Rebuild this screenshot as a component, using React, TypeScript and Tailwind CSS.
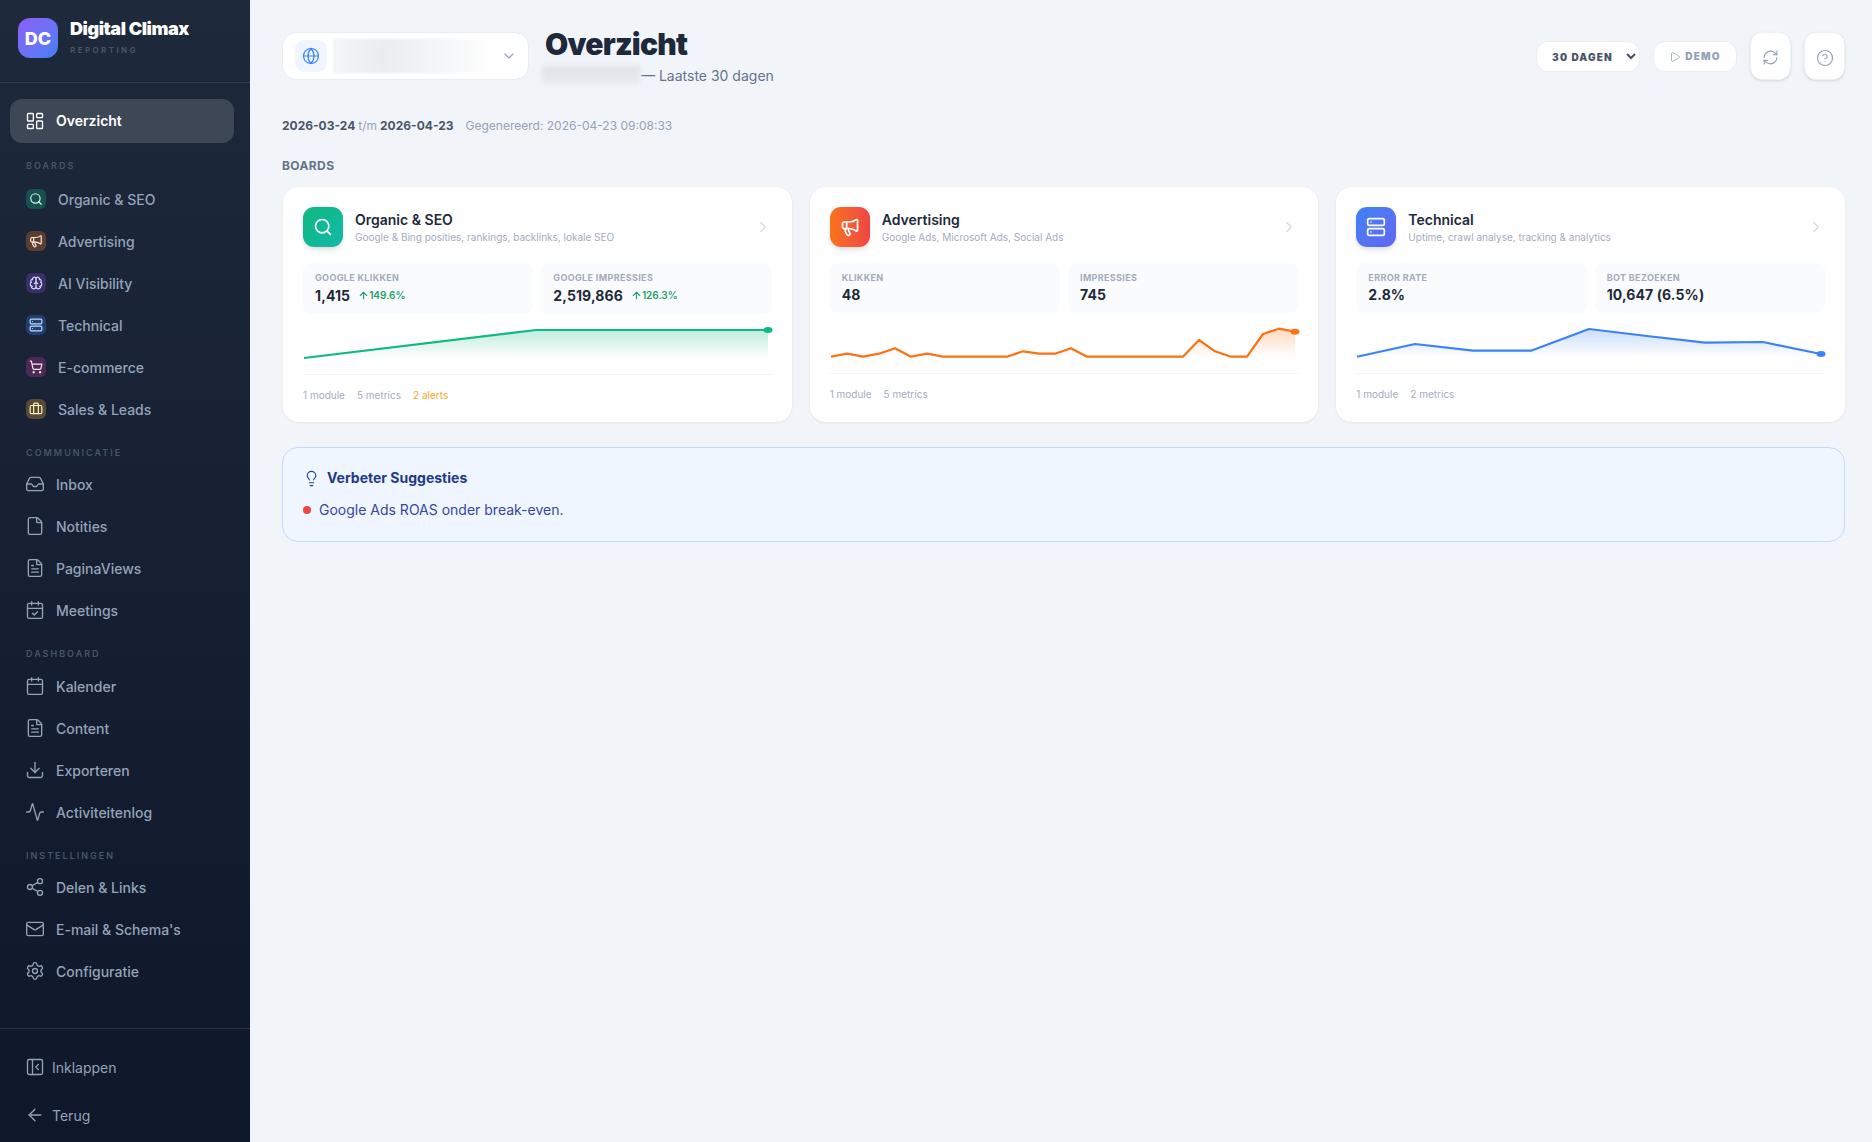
import type { ComponentType, ReactNode } from 'react';
import {
  Activity,
  ArrowLeft,
  ArrowUp,
  Brain,
  Briefcase,
  Calendar,
  CalendarCheck,
  ChevronDown,
  ChevronRight,
  CircleHelp,
  Download,
  File,
  FileText,
  Globe,
  Inbox,
  LayoutDashboard,
  Lightbulb,
  Mail,
  Megaphone,
  PanelLeftClose,
  Play,
  RefreshCw,
  Search,
  Server,
  Settings,
  Share2,
  ShoppingCart,
} from 'lucide-react';

type IconType = ComponentType<{ className?: string; strokeWidth?: number }>;

const boardLinks: { label: string; icon: IconType; tint: string; color: string }[] = [
  { label: 'Organic & SEO', icon: Search, tint: 'bg-[#17504f]', color: 'text-[#d1fae5]' },
  { label: 'Advertising', icon: Megaphone, tint: 'bg-[#5c3d33]', color: 'text-[#ffedd5]' },
  { label: 'AI Visibility', icon: Brain, tint: 'bg-[#372f68]', color: 'text-[#ddd6fe]' },
  { label: 'Technical', icon: Server, tint: 'bg-[#22406f]', color: 'text-[#bfdbfe]' },
  { label: 'E-commerce', icon: ShoppingCart, tint: 'bg-[#4c2a55]', color: 'text-[#fce7f3]' },
  { label: 'Sales & Leads', icon: Briefcase, tint: 'bg-[#564a33]', color: 'text-[#fef3c7]' },
];

const navGroups: { title: string; rowsPad: string; items: { label: string; icon: IconType }[] }[] = [
  {
    title: 'COMMUNICATIE',
    rowsPad: 'pt-[3px]',
    items: [
      { label: 'Inbox', icon: Inbox },
      { label: 'Notities', icon: File },
      { label: 'PaginaViews', icon: FileText },
      { label: 'Meetings', icon: CalendarCheck },
    ],
  },
  {
    title: 'DASHBOARD',
    rowsPad: 'pt-[4px]',
    items: [
      { label: 'Kalender', icon: Calendar },
      { label: 'Content', icon: FileText },
      { label: 'Exporteren', icon: Download },
      { label: 'Activiteitenlog', icon: Activity },
    ],
  },
  {
    title: 'INSTELLINGEN',
    rowsPad: 'pt-[3px]',
    items: [
      { label: 'Delen & Links', icon: Share2 },
      { label: 'E-mail & Schema\'s', icon: Mail },
      { label: 'Configuratie', icon: Settings },
    ],
  },
];

type Stat = { label: string; value: string; delta?: string };

type Board = {
  id: string;
  title: string;
  subtitle: string;
  icon: IconType;
  iconBg: string;
  stats: Stat[];
  series: number[];
  stroke: string;
  footer: string[];
  alerts?: string;
};

const boards: Board[] = [
  {
    id: 'seo',
    title: 'Organic & SEO',
    subtitle: 'Google & Bing posities, rankings, backlinks, lokale SEO',
    icon: Search,
    iconBg: 'bg-gradient-to-br from-[#10b981] to-[#14b8a6]',
    stats: [
      { label: 'GOOGLE KLIKKEN', value: '1,415', delta: '149.6%' },
      { label: 'GOOGLE IMPRESSIES', value: '2,519,866', delta: '126.3%' },
    ],
    series: [37, 9, 9],
    stroke: '#10b981',
    footer: ['1 module', '5 metrics'],
    alerts: '2 alerts',
  },
  {
    id: 'ads',
    title: 'Advertising',
    subtitle: 'Google Ads, Microsoft Ads, Social Ads',
    icon: Megaphone,
    iconBg: 'bg-gradient-to-r from-[#f97316] to-[#ef4444]',
    stats: [
      { label: 'KLIKKEN', value: '48' },
      { label: 'IMPRESSIES', value: '745' },
    ],
    series: [
      36.7, 33.7, 36.7, 33.7, 28.3, 36.7, 33.7, 36.7, 36.7, 36.7, 36.7, 36.7, 31.3, 33.7, 33.7, 28.3, 36.7, 36.7, 36.7, 36.7, 36.7, 36.7, 36.7, 20, 31.3,
      36.7, 36.7, 14, 8.7, 11.7,
    ],
    stroke: '#f97316',
    footer: ['1 module', '5 metrics'],
  },
  {
    id: 'tech',
    title: 'Technical',
    subtitle: 'Uptime, crawl analyse, tracking & analytics',
    icon: Server,
    iconBg: 'bg-gradient-to-br from-[#3b82f6] to-[#6366f1]',
    stats: [
      { label: 'ERROR RATE', value: '2.8%' },
      { label: 'BOT BEZOEKEN', value: '10,647 (6.5%)' },
    ],
    series: [36.7, 24, 30.7, 30.7, 9, 16, 22.7, 22, 34],
    stroke: '#3b82f6',
    footer: ['1 module', '2 metrics'],
  },
];

function NavRow({ icon: Icon, children }: { icon: IconType; children: ReactNode }) {
  return (
    <div className="flex h-[42px] items-center gap-[11px] pl-[25px] text-[14px] font-medium text-[#94a3b8]">
      <Icon className="h-5 w-5 shrink-0 text-[#94a3b8]" strokeWidth={1.6} />
      <span>{children}</span>
    </div>
  );
}

function Sidebar() {
  return (
    <aside className="flex h-[1142px] w-[250px] shrink-0 flex-col bg-gradient-to-b from-[#1e293b] to-[#0f172a]">
      <div className="flex h-[83px] items-start gap-[12px] border-b border-white/10 pl-[18px] pt-[18px]">
        <div className="flex h-10 w-10 items-center justify-center rounded-[12px] bg-gradient-to-br from-[#8b5cf6] to-[#3b82f6] text-[18px] font-extrabold text-white">
          DC
        </div>
        <div className="pt-[1px]">
          <div className="text-[18px] leading-[20px] font-black tracking-[-0.45px] text-white">Digital Climax</div>
          <div className="mt-[6px] text-[8px] leading-[10px] font-bold tracking-[2.4px] text-[#475569]">REPORTING</div>
        </div>
      </div>

      <div className="px-[10px] pt-4">
        <div className="flex h-[44px] w-[224px] items-center gap-[11px] rounded-[12px] bg-white/15 pb-[1px] pl-[15px] text-[14px] font-semibold text-white">
          <LayoutDashboard className="h-5 w-5" strokeWidth={1.6} />
          <span>Overzicht</span>
        </div>
      </div>

      <div className="pt-[16px]">
        <div className="pl-[26px] text-[9px] leading-[14px] font-semibold tracking-[2px] text-[#475569]">BOARDS</div>
        <div className="pt-[5px]">
          {boardLinks.map(link => (
            <div key={link.label} className="flex h-[42px] items-center gap-3 pl-[26px] text-[14px] font-medium text-[#94a3b8]">
              <span className={`flex h-5 w-5 items-center justify-center rounded-[6px] ${link.tint}`}>
                <link.icon className={`h-3.5 w-3.5 ${link.color}`} strokeWidth={2} />
              </span>
              <span>{link.label}</span>
            </div>
          ))}
        </div>
      </div>

      {navGroups.map(group => (
        <div key={group.title} className="pt-[16px]">
          <div className="pl-[26px] text-[9px] leading-[14px] font-semibold tracking-[2px] text-[#475569]">{group.title}</div>
          <div className={group.rowsPad}>
            {group.items.map(item => (
              <NavRow key={item.label} icon={item.icon}>
                {item.label}
              </NavRow>
            ))}
          </div>
        </div>
      ))}

      <div className="mt-auto border-t border-white/10 pb-[3px] pt-[14px]">
        <div className="flex h-[48px] items-center gap-[7px] pl-[25px] text-[14px] text-[#94a3b8]">
          <PanelLeftClose className="h-5 w-5" strokeWidth={1.6} />
          <span>Inklappen</span>
        </div>
        <div className="flex h-[48px] items-center gap-[7px] pl-[25px] text-[14px] text-[#94a3b8]">
          <ArrowLeft className="h-5 w-5" strokeWidth={1.6} />
          <span>Terug</span>
        </div>
      </div>
    </aside>
  );
}

function Header() {
  return (
    <header className="flex items-start">
      <div className="flex h-[48px] w-[247px] items-center rounded-[14px] border border-[#e8edf3] bg-white pl-3 pr-[11px]">
        <span className="flex h-8 w-8 shrink-0 items-center justify-center rounded-[9px] bg-[#eff6ff]">
          <Globe className="h-[18px] w-[18px] text-[#3b82f6]" strokeWidth={1.6} />
        </span>
        <div className="ml-1.5 h-[34px] w-[164px] shrink-0 bg-gradient-to-r from-[#f4f5f6] via-[#eaecee] via-30% to-white blur-[1px]" />
        <ChevronDown className="ml-auto h-4 w-4 text-[#94a3b8]" strokeWidth={1.75} />
      </div>

      <div className="ml-[16px] -mt-[6px]">
        <h1 className="text-[30px] leading-[36px] font-black tracking-[-0.75px] text-[#1e293b]">Overzicht</h1>
        <div className="mt-[4px] flex items-center text-[14px] leading-[20px] text-[#64748b]">
          <div className="mr-[1px] -ml-[3px] h-[20px] w-[98px] shrink-0 bg-gradient-to-b from-[#dee1e5] to-[#eceef1] blur-[2px]" />
          <span>— Laatste 30 dagen</span>
        </div>
      </div>

      <div className="ml-auto flex items-start gap-[13px]">
        <select
          defaultValue="30"
          className="mt-[9px] h-[31px] w-[104px] rounded-[12px] border border-[#e8edf3] bg-white pl-[11px] text-[10px] font-black tracking-[1.2px] text-[#475569]"
        >
          <option value="30">30 DAGEN</option>
        </select>
        <div className="mt-[9px] flex h-[31px] w-[84px] items-center justify-center gap-[4px] rounded-[12px] border border-[#e8edf3] bg-white text-[10px] font-black tracking-[1.2px] text-[#94a3b8]">
          <Play className="h-3 w-3" strokeWidth={1.6} />
          <span>DEMO</span>
        </div>
        <div className="flex h-[48px] w-[41px] items-center justify-center rounded-[12px] border border-[#eef1f5] bg-white pt-[3px] text-[#94a3b8] shadow-sm">
          <RefreshCw className="h-[17px] w-[17px]" strokeWidth={1.6} />
        </div>
        <div className="flex h-[48px] w-[41px] items-center justify-center rounded-[12px] border border-[#eef1f5] bg-white pt-[3px] text-[#94a3b8] shadow-sm">
          <CircleHelp className="h-[18px] w-[18px]" strokeWidth={1.6} />
        </div>
      </div>
    </header>
  );
}

function Sparkline({ board }: { board: Board }) {
  const gradientId = `fill-${board.id}`;
  const step = 464 / (board.series.length - 1);
  const coords = board.series.map((y, i) => `${(i * step).toFixed(1)},${y}`);
  const last = board.series[board.series.length - 1];
  return (
    <svg viewBox="0 0 464 53" className="ml-[1px] mt-[7px] block h-[53px] w-[464px] shrink-0 overflow-visible" fill="none">
      <defs>
        <linearGradient id={gradientId} gradientUnits="userSpaceOnUse" x1="0" y1="8" x2="0" y2="37">
          <stop offset="0%" stopColor={board.stroke} stopOpacity="0.28" />
          <stop offset="100%" stopColor={board.stroke} stopOpacity="0" />
        </linearGradient>
      </defs>
      <polygon points={`${coords.join(' ')} 464,37 0,37`} fill={`url(#${gradientId})`} />
      <polyline points={coords.join(' ')} stroke={board.stroke} strokeWidth="2.2" strokeLinejoin="round" />
      <ellipse cx="464" cy={last} rx="4.5" ry="3" fill={board.stroke} />
    </svg>
  );
}

function BoardCard({ board }: { board: Board }) {
  const Icon = board.icon;
  return (
    <div className="flex h-[235px] min-w-0 flex-1 flex-col rounded-[16px] bg-white p-5 shadow-[0_1px_3px_rgba(15,23,42,0.06)]">
      <div className="flex items-center">
        <div className={`flex h-10 w-10 shrink-0 items-center justify-center rounded-[11px] shadow-md ${board.iconBg}`}>
          <Icon className="h-5 w-5 text-white" strokeWidth={2} />
        </div>
        <div className="ml-3 min-w-0">
          <div className="text-[14px] leading-[18px] font-semibold text-[#1e293b]">{board.title}</div>
          <div className="mt-[1px] text-[10px] leading-[14px] text-[#a3acbd]">{board.subtitle}</div>
        </div>
        <ChevronRight className="ml-auto h-[18px] w-[18px] text-[#d5dae2]" strokeWidth={1.6} />
      </div>

      <div className="mt-4 grid grid-cols-2 gap-2">
        {board.stats.map(stat => (
          <div key={stat.label} className="rounded-[8px] bg-[#f9fbfc] pb-[8px] pl-[12px] pr-[11px] pt-[9px]">
            <div className="text-[9px] leading-[12px] font-bold tracking-[0.35px] text-[#a3acbd]">{stat.label}</div>
            <div className="mt-[1px] flex min-h-[20px] items-center gap-[8px]">
              <span className="text-[14px] leading-[20px] font-bold tracking-[0.1px] text-[#1e293b]">{stat.value}</span>
              {stat.delta && (
                <span className="flex items-center text-[10px] leading-[21px] font-semibold text-[#22a06b]">
                  <ArrowUp className="h-[11px] w-[11px]" strokeWidth={2.5} />
                  {stat.delta}
                </span>
              )}
            </div>
          </div>
        ))}
      </div>

      <Sparkline board={board} />

      <div className="flex gap-3 border-t border-[#f3f5f8] pt-[13px] text-[10px] leading-[14px] text-[#a3acbd]">
        {board.footer.map(text => (
          <span key={text}>{text}</span>
        ))}
        {board.alerts && <span className="text-[#f5a524]">{board.alerts}</span>}
      </div>
    </div>
  );
}

export default function App() {
  return (
    <div className="flex h-[1142px] w-[1872px] overflow-hidden bg-[#f1f5f9] font-['Inter',sans-serif]">
      <Sidebar />
      <main className="min-w-0 flex-1 pl-[32px] pr-[27px] pt-[32px]">
        <Header />

        <div className="mt-[31px] flex items-center text-[12px] leading-[18px] text-[#94a3b8]">
          <span className="font-bold text-[#475569]">2026-03-24</span>
          <span className="mx-[3px]">t/m</span>
          <span className="font-bold text-[#475569]">2026-04-23</span>
          <span className="ml-3">Gegenereerd: 2026-04-23 09:08:33</span>
        </div>

        <div className="mt-[23px] text-[12px] leading-4 font-bold tracking-[0.4px] text-[#64748b]">BOARDS</div>

        <div className="ml-[1px] mt-[13px] flex gap-[18px]">
          {boards.map(board => (
            <BoardCard key={board.id} board={board} />
          ))}
        </div>

        <div className="mt-[25px] h-[95px] rounded-[16px] border border-[#bfdbfe] bg-[#eff6ff] px-5 pt-5">
          <div className="flex items-center gap-[7px] text-[14px] leading-[20px] font-bold text-[#1e3a8a]">
            <Lightbulb className="h-[17px] w-[17px] text-[#1e40af]" strokeWidth={1.6} />
            <span>Verbeter Suggesties</span>
          </div>
          <div className="mt-[12px] flex items-center gap-[8px] text-[14px] leading-[20px] text-[#3647a0]">
            <span className="h-2 w-2 rounded-full bg-[#ef4444]" />
            <span>Google Ads ROAS onder break-even.</span>
          </div>
        </div>
      </main>
    </div>
  );
}
